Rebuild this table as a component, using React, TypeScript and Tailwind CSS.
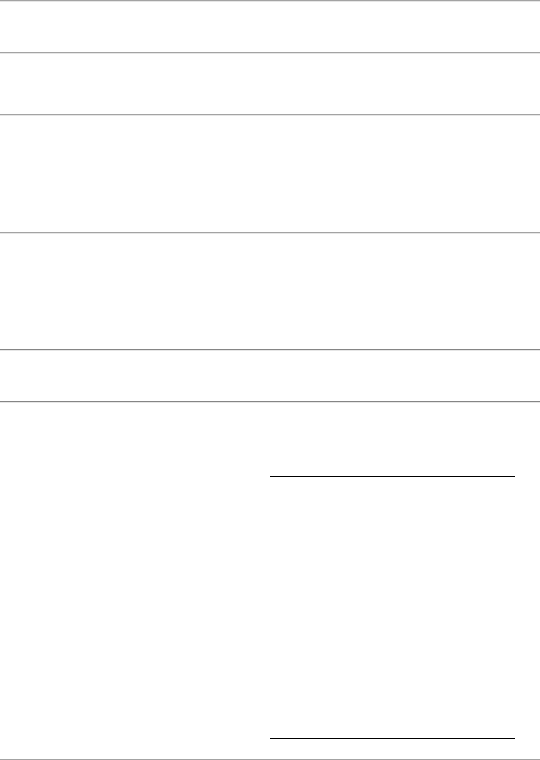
function Rule({ dark = false }: { dark?: boolean }) {
  return (
    <div
      className={
        dark
          ? 'h-[2px] shrink-0 border-t border-[#858585] border-b border-b-[#e6e6e6]'
          : 'h-[2px] shrink-0 border-t border-[#a3a3a3] border-b border-b-[#e6e6e6]'
      }
    />
  )
}

export default function App() {
  return (
    <div className="w-[540px] h-[760px] overflow-hidden bg-white flex flex-col font-['Liberation_Sans',sans-serif]">
      <Rule />
      <div className="h-[50px] shrink-0" />
      <Rule />
      <div className="h-[60px] shrink-0" />
      <Rule />
      <div className="h-[116px] shrink-0" />
      <Rule />
      <div className="h-[115px] shrink-0" />
      <Rule dark />
      <div className="h-[50px] shrink-0" />
      <Rule dark />
      {/* signature area */}
      <div className="h-[356px] shrink-0 flex">
        <div className="w-[270px]" />
        <div className="w-[245px] flex flex-col">
          <div className="mt-[73px] border-t border-black" />
          <div className="mt-[261px] border-t border-black" />
        </div>
      </div>
      <Rule />
    </div>
  )
}
